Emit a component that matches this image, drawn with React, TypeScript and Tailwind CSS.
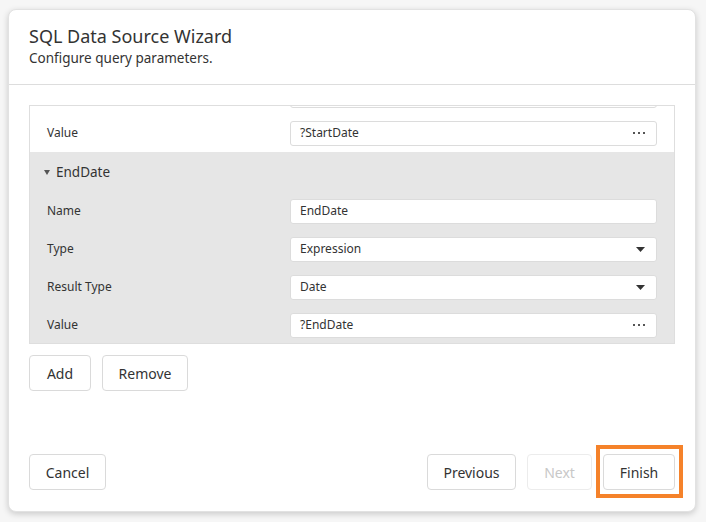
import React from 'react';

const font = { fontFamily: '"Segoe UI", "Noto Sans", "Open Sans", sans-serif' };

const Ellipsis = () => (
  <svg width="12" height="4" viewBox="0 0 12 4" className="text-[#555]">
    <rect x="0" y="1" width="2" height="2" fill="currentColor" />
    <rect x="5" y="1" width="2" height="2" fill="currentColor" />
    <rect x="10" y="1" width="2" height="2" fill="currentColor" />
  </svg>
);

const Caret = () => (
  <svg width="9" height="5" viewBox="0 0 9 5" className="text-[#333]">
    <path d="M0 0h9L4.5 5z" fill="currentColor" />
  </svg>
);

type Kind = 'text' | 'select' | 'dots';

const FieldRow: React.FC<{ label: string; value: string; kind?: Kind }> = ({ label, value, kind = 'text' }) => (
  <div className="h-[38px] flex items-center pl-[17px] pr-[17px]">
    <div className="w-[243px] text-[12px] text-[#333]">{label}</div>
    <div className="flex-1 h-[25px] bg-white border border-[#dcdcdc] rounded-[3px] flex items-center pl-[9px] pr-[11px] text-[12px] text-[#333]">
      <span className="flex-1">{value}</span>
      {kind === 'select' && <Caret />}
      {kind === 'dots' && <Ellipsis />}
    </div>
  </div>
);

const Btn: React.FC<{ children: React.ReactNode; w: string; disabled?: boolean }> = ({ children, w, disabled }) => (
  <button
    className={
      'h-[36px] rounded-[4px] border bg-white text-[14px] flex items-center justify-center ' +
      w +
      (disabled ? ' border-[#ececec] text-[#c8c8c8]' : ' border-[#dadada] text-[#333]')
    }
  >
    {children}
  </button>
);

export default function App() {
  return (
    <div className="w-[706px] h-[522px] bg-[#f6f6f6] overflow-hidden" style={font}>
      <div className="ml-[8px] mt-[9px] w-[688px] h-[503px] bg-white rounded-[8px] border border-[#e2e2e2] shadow-[0_2px_6px_rgba(0,0,0,0.18)] flex flex-col">
        {/* Header */}
        <div className="h-[75px] border-b border-[#dddddd] px-[20px] pt-[15px]">
          <div className="text-[18px] leading-[22px] text-[#333]">SQL Data Source Wizard</div>
          <div className="text-[13.5px] leading-[22px] text-[#333]">Configure query parameters.</div>
        </div>

        {/* Body */}
        <div className="flex-1 px-[20px] pt-[20px]">
          <div className="h-[239px] border border-[#dedede] overflow-hidden">
            <div className="-mt-[30px]">
              <FieldRow label="" value="" />
              <FieldRow label="Value" value="?StartDate" kind="dots" />
              <div className="bg-[#e6e6e6]">
                <div className="h-[40px] flex items-center pl-[14px] text-[13.5px] text-[#333]">
                  <svg width="6" height="5" viewBox="0 0 6 5" className="mr-[6px] text-[#555]">
                    <path d="M0 0h6L3 5z" fill="currentColor" />
                  </svg>
                  EndDate
                </div>
                <FieldRow label="Name" value="EndDate" />
                <FieldRow label="Type" value="Expression" kind="select" />
                <FieldRow label="Result Type" value="Date" kind="select" />
                <FieldRow label="Value" value="?EndDate" kind="dots" />
              </div>
            </div>
          </div>

          <div className="flex gap-[11px] mt-[11px]">
            <Btn w="w-[62px]">Add</Btn>
            <Btn w="w-[86px]">Remove</Btn>
          </div>
        </div>

        {/* Footer */}
        <div className="px-[20px] pb-[21px] flex items-center">
          <Btn w="w-[77px]">Cancel</Btn>
          <div className="flex-1" />
          <div className="flex gap-[11px]">
            <Btn w="w-[89px]">Previous</Btn>
            <Btn w="w-[65px]" disabled>Next</Btn>
            <div className="relative">
              <Btn w="w-[72px]">Finish</Btn>
              <div className="absolute -left-[7px] -right-[8px] -top-[9px] -bottom-[8px] border-[4px] border-[#f5822a]" />
            </div>
          </div>
        </div>
      </div>
    </div>
  );
}
